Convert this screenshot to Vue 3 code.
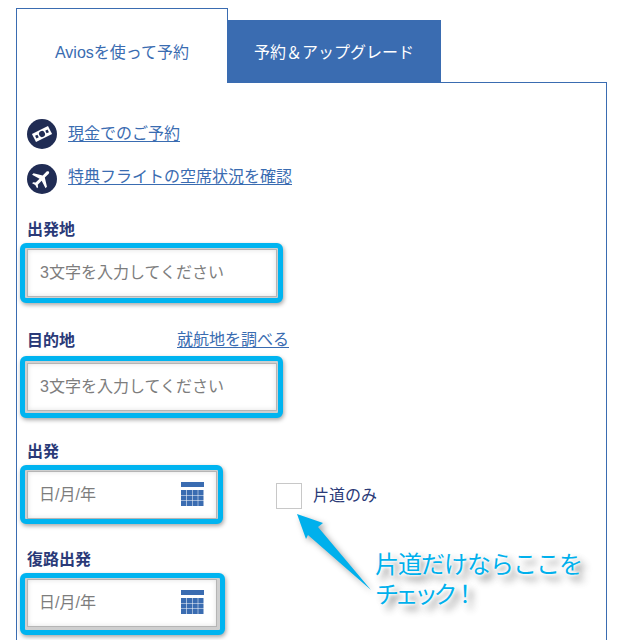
<script setup>
const calendarCells = []
for (let row = 0; row < 3; row++) {
  for (let col = 0; col < 4; col++) {
    calendarCells.push({ x: col * 5.75, y: 8 + row * 5.5 })
  }
}
</script>

<template>
  <div class="page">
    <div class="tabs">
      <div class="tab tab-active">Aviosを使って予約</div>
      <div class="tab tab-other">予約＆アップグレード</div>
    </div>

    <div class="panel">
      <div class="link-row">
        <span class="round-icon">
          <svg viewBox="0 0 30 30" width="30" height="30">
            <g transform="rotate(-27 15 15)">
              <rect x="6" y="10.5" width="18" height="9" fill="#fff" />
              <circle cx="15" cy="15" r="3" fill="#202c54" />
              <rect x="8" y="13.5" width="2.6" height="3" fill="#202c54" />
              <rect x="19.4" y="13.5" width="2.6" height="3" fill="#202c54" />
            </g>
          </svg>
        </span>
        <a class="link">現金でのご予約</a>
      </div>
      <div class="link-row second-link">
        <span class="round-icon">
          <svg viewBox="0 0 24 24" width="30" height="30">
            <path
              transform="rotate(45 12 12) translate(2.4 2.4) scale(.8)"
              fill="#fff"
              d="M21 16v-2l-8-5V3.5c0-.83-.67-1.5-1.5-1.5S10 2.67 10 3.5V9l-8 5v2l8-2.5V19l-2 1.5V22l3.5-1 3.5 1v-1.5L13 19v-5.5l8 2.5z"
            />
          </svg>
        </span>
        <a class="link">特典フライトの空席状況を確認</a>
      </div>

      <div class="label-row origin-label">
        <label class="label">出発地</label>
      </div>
      <div class="frame frame-wide">
        <input class="field" type="text" placeholder="3文字を入力してください" />
      </div>

      <div class="label-row dest-label">
        <label class="label">目的地</label>
        <a class="link">就航地を調べる</a>
      </div>
      <div class="frame frame-wide frame-tall">
        <input class="field" type="text" placeholder="3文字を入力してください" />
      </div>

      <div class="label-row depart-label">
        <label class="label">出発</label>
      </div>
      <div class="date-row">
        <div class="frame frame-date frame-short">
          <input class="field field-date" type="text" placeholder="日/月/年" />
          <svg class="calendar" viewBox="0 0 23 24" width="23" height="24">
            <rect width="23" height="5" fill="#3a6cb1" />
            <rect
              v-for="(c, i) in calendarCells"
              :key="i"
              :x="c.x"
              :y="c.y"
              width="5.25"
              height="5"
              fill="#3a6cb1"
            />
          </svg>
        </div>
        <span class="check"></span>
        <span class="check-text">片道のみ</span>
      </div>

      <div class="label-row return-label">
        <label class="label">復路出発</label>
      </div>
      <div class="frame frame-date frame-return">
        <input class="field field-date" type="text" placeholder="日/月/年" />
        <svg class="calendar" viewBox="0 0 23 24" width="23" height="24">
          <rect width="23" height="5" fill="#3a6cb1" />
          <rect
            v-for="(c, i) in calendarCells"
            :key="i"
            :x="c.x"
            :y="c.y"
            width="5.25"
            height="5"
            fill="#3a6cb1"
          />
        </svg>
      </div>
    </div>

    <svg class="arrow" viewBox="0 0 90 90" width="90" height="90">
      <polygon points="7,4 33,13 28,17 81,80 18,25 16,29" fill="#00b0ec" />
    </svg>
    <div class="callout">
      <div class="callout-first">片道だけならここを</div>
      <div class="callout-second">チェック！</div>
    </div>
  </div>
</template>

<style scoped>
.page {
  position: relative;
  width: 623px;
  height: 640px;
  padding: 8px 16px 0;
  box-sizing: border-box;
  overflow: hidden;
  background: #fff;
  font-family: "Liberation Sans", "Noto Sans CJK JP", sans-serif;
  font-size: 16px;
  font-weight: 400;
}
.tabs {
  display: flex;
  align-items: flex-end;
  position: relative;
  z-index: 1;
}
.tab {
  display: flex;
  align-items: center;
  justify-content: center;
  box-sizing: border-box;
}
.tab-active {
  width: 212px;
  height: 75px;
  padding-top: 10px;
  border: 1px solid #3a6cb1;
  border-bottom: 0;
  background: #fff;
  color: #3a6cb1;
}
.tab-other {
  width: 214px;
  height: 63px;
  padding-bottom: 1px;
  margin-left: -1px;
  background: #3a6cb1;
  color: #fff;
}
.panel {
  margin-top: -1px;
  width: 591px;
  height: 600px;
  box-sizing: border-box;
  padding: 36px 10px 0;
  border: 1px solid #3a6cb1;
}
.link-row {
  display: flex;
  align-items: center;
  gap: 11px;
  height: 30px;
}
.second-link {
  margin-top: 15px;
}
.round-icon {
  display: block;
  width: 30px;
  height: 30px;
  border-radius: 50%;
  background: #202c54;
}
.round-icon svg {
  display: block;
}
.link {
  color: #3a6cb1;
  text-decoration: underline;
  text-underline-offset: 2px;
  line-height: 20px;
}
.link-row .link {
  margin-top: -1px;
}
.link-row.second-link .link {
  margin-top: -4px;
}
.label-row {
  display: flex;
  justify-content: space-between;
  width: 263px;
  height: 20px;
  line-height: 20px;
}
.label-row .link {
  margin-top: -1px;
  margin-right: 1px;
}
.label {
  font-size: 16px;
  font-weight: 700;
  color: #2a3a78;
}
.origin-label {
  margin-top: 26px;
  margin-bottom: 3px;
}
.dest-label {
  margin-top: 28px;
  margin-bottom: 5px;
}
.depart-label {
  margin-top: 24px;
  margin-bottom: 3px;
}
.return-label {
  margin-top: 26px;
  margin-bottom: 3px;
}
.frame {
  position: relative;
  box-sizing: border-box;
  margin-left: -7px;
  padding: 1px 1px 1px 2px;
  height: 60px;
  border: 5px solid #00b4f0;
  border-radius: 6px;
  background: #cfcfcf;
  box-shadow: 1px 2px 4px rgba(0, 0, 0, 0.35);
}
.frame-wide {
  width: 263px;
}
.frame-tall {
  height: 62px;
  padding-top: 2px;
  padding-bottom: 2px;
}
.frame-date {
  width: 203px;
}
.frame-short {
  height: 59px;
}
.frame-return {
  width: 205px;
  height: 62px;
  padding-right: 3px;
}
.field {
  display: block;
  width: 100%;
  height: 48px;
  box-sizing: border-box;
  padding: 0 12px;
  border: 1px solid #b5b5b5;
  outline: 0;
  background: #fff;
  box-shadow: inset 0 0 5px rgba(0, 0, 0, 0.12);
  font: inherit;
}
.field-date {
  padding-left: 11px;
}
.field::placeholder {
  color: #7d7d7d;
  opacity: 1;
}
.calendar {
  position: absolute;
  top: 12px;
  left: 156px;
}
.date-row {
  display: flex;
  align-items: center;
}
.check {
  display: block;
  box-sizing: border-box;
  width: 26px;
  height: 26px;
  margin: 3px 0 0 53px;
  border: 1px solid #c8c8c8;
}
.check-text {
  margin: 2px 0 0 11px;
  color: #2a3a78;
  line-height: 20px;
}
.arrow {
  position: absolute;
  left: 290px;
  top: 510px;
  filter: drop-shadow(3px 3px 3px rgba(0, 0, 0, 0.35));
}
.callout {
  position: absolute;
  left: 375px;
  top: 550px;
  color: #00b0ec;
  font-size: 24px;
  font-weight: 400;
  line-height: 30px;
  white-space: nowrap;
  text-shadow:
    0 0 2px #fff,
    0 0 3px #fff,
    0 0 4px #fff,
    0 0 5px #fff,
    5px 5px 7px rgba(0, 0, 0, 0.35),
    6px 6px 9px rgba(0, 0, 0, 0.3);
}
.callout-first {
  letter-spacing: -1px;
}
.callout-second {
  letter-spacing: -4.5px;
}
</style>
